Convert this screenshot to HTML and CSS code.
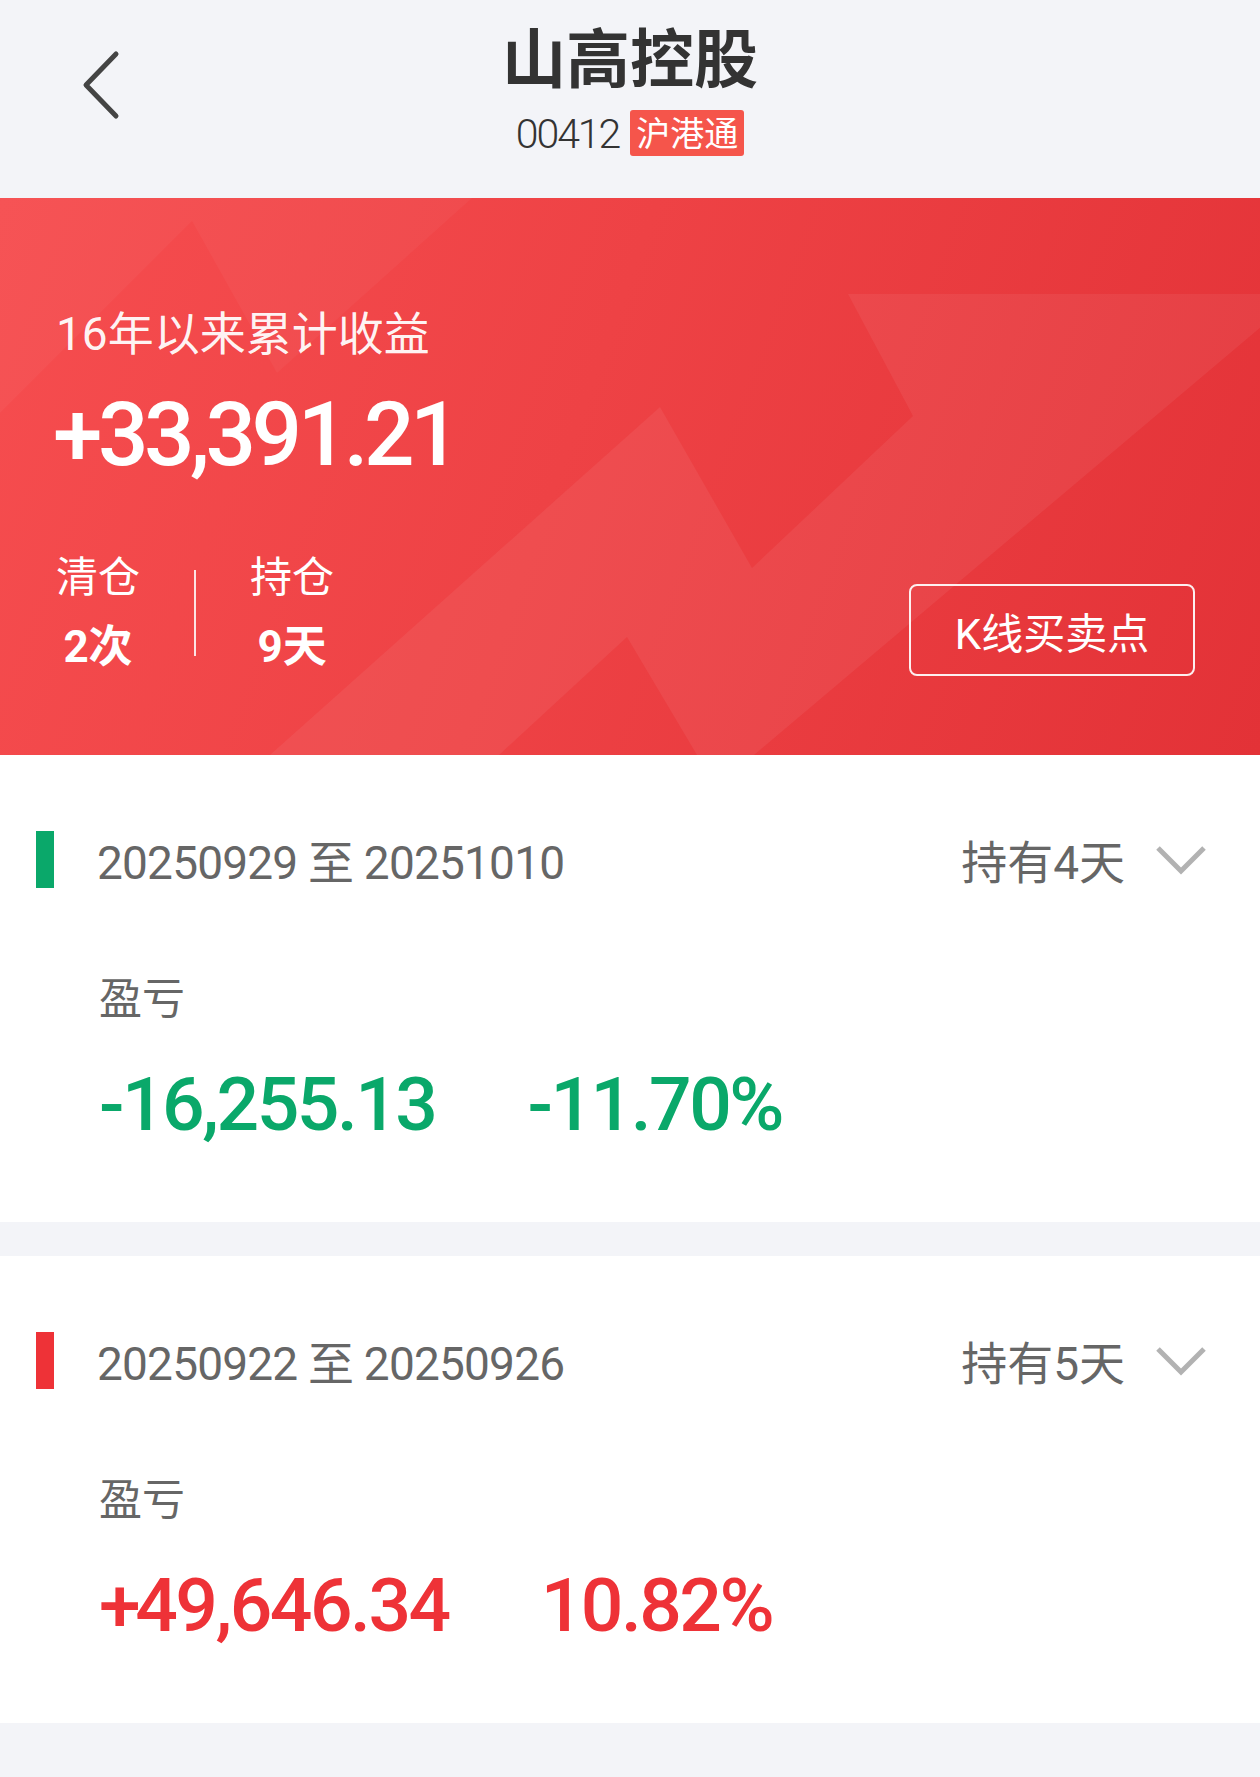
FILE: index.html
```html
<!DOCTYPE html>
<html lang="zh-CN">
	<head>
		<meta charset="UTF-8" />
		<meta name="viewport" content="width=device-width, initial-scale=1" />
		<title>山高控股 交易记录</title>
		<link rel="stylesheet" href="styles.css">
	</head>
	<body>
		<header class="topbar">
			<a class="back" href="#">
				<svg width="40" height="70" viewBox="0 0 40 70">
					<path d="M35 4 L5 35 L35 66" />
				</svg>
			</a>
			<div class="stock">
				<h1 class="stock-name">山高控股</h1>
				<div class="stock-code">
					<span class="code">00412</span>
					<span class="tag">沪港通</span>
				</div>
			</div>
		</header>

		<section class="summary">
			<!-- background pattern -->
			<svg class="summary-bg" viewBox="0 0 1260 557" preserveAspectRatio="none">
				<polygon class="shade-soft" points="0,0 472,0 277,175 192,23 0,215" />
				<polygon class="shade" points="270,557 660,209 752,370 913,218 848,96 1300,96 754,557 697,557 627,439 499,557" />
			</svg>
			<div class="summary-label">16年以来累计收益</div>
			<div class="summary-total">+33,391.21</div>
			<div class="summary-foot">
				<div class="stats">
					<div class="stat">
						<div class="stat-name">清仓</div>
						<div class="stat-value">2次</div>
					</div>
					<div class="stat-divider"></div>
					<div class="stat">
						<div class="stat-name">持仓</div>
						<div class="stat-value">9天</div>
					</div>
				</div>
				<a class="kline-btn" href="#">K线买卖点</a>
			</div>
		</section>

		<section class="trade loss">
			<div class="trade-head">
				<span class="trade-bar"></span>
				<span class="trade-range">20250929 至 20251010</span>
				<span class="trade-hold">持有4天</span>
				<svg class="trade-toggle" width="50" height="30" viewBox="0 0 50 30">
					<polyline points="2,3 25,26 48,3" />
				</svg>
			</div>
			<div class="trade-label">盈亏</div>
			<div class="trade-values">
				<span>-16,255.13</span>
				<span>-11.70%</span>
			</div>
		</section>

		<section class="trade gain">
			<div class="trade-head">
				<span class="trade-bar"></span>
				<span class="trade-range">20250922 至 20250926</span>
				<span class="trade-hold">持有5天</span>
				<svg class="trade-toggle" width="50" height="30" viewBox="0 0 50 30">
					<polyline points="2,3 25,26 48,3" />
				</svg>
			</div>
			<div class="trade-label">盈亏</div>
			<div class="trade-values">
				<span><span class="plus">+</span>49,646.34</span>
				<span>10.82%</span>
			</div>
		</section>
	</body>
</html>
```

FILE: styles.css
```css
body {
	margin: 0;
	background-color: #f3f4f8;
	font-family: 'Roboto', 'Noto Sans CJK SC', sans-serif;
	color: #333;
}

a {
	color: inherit;
	text-decoration: none;
}

/* top bar */

.topbar {
	display: grid;
	grid-template-columns: 1fr auto 1fr;
	height: 198px;
	box-sizing: border-box;
}

.back {
	justify-self: start;
	padding: 50px 0 0 81px;
}

.back svg {
	display: block;
	fill: none;
	stroke: #444;
	stroke-width: 5;
	stroke-linecap: round;
	stroke-linejoin: round;
}

.stock {
	padding-top: 22px;
	text-align: center;
}

.stock-name {
	margin: 0;
	font-family: 'Noto Sans CJK SC', sans-serif;
	font-size: 64px;
	line-height: 64px;
	font-weight: 700;
	color: #333;
}

.stock-code {
	display: flex;
	justify-content: center;
	gap: 11px;
	margin-top: 24px;
}

.code {
	font-size: 41px;
	font-weight: 300;
	line-height: 43px;
	letter-spacing: -2px;
	padding-top: 3px;
	color: #333;
}

.tag {
	padding: 0 6px;
	border-radius: 3px;
	background-color: #f5554b;
	color: #fff;
	font-family: 'Noto Sans CJK SC', sans-serif;
	font-size: 34px;
	line-height: 43px;
}

/* red summary */

.summary {
	position: relative;
	overflow: hidden;
	height: 557px;
	box-sizing: border-box;
	padding: 113px 65px 0 56px;
	background: linear-gradient(110deg, #f64d4f 0%, #ee4245 45%, #e33237 100%);
	color: #fff;
}

.summary-bg {
	position: absolute;
	top: 0;
	left: 0;
	width: 100%;
	height: 100%;
}

.shade {
	fill: #fff;
	fill-opacity: 0.06;
}

.shade-soft {
	fill: #fff;
	fill-opacity: 0.035;
}

.summary-label,
.summary-total,
.summary-foot {
	position: relative;
}

.summary-label {
	font-size: 46px;
	line-height: 46px;
	color: rgba(255, 255, 255, 0.95);
}

.summary-total {
	margin: 33px 0 0 -3px;
	font-size: 89px;
	line-height: 89px;
	font-weight: 500;
	letter-spacing: -4.5px;
}

.summary-foot {
	display: flex;
	justify-content: space-between;
	align-items: flex-start;
	margin-top: 78px;
}

.stats {
	display: flex;
	align-items: center;
}

.stat {
	text-align: center;
}

.stat-name {
	font-size: 42px;
	line-height: 42px;
}

.stat-value {
	margin-top: 26px;
	font-size: 44px;
	line-height: 44px;
	font-weight: 700;
}

.stat-divider {
	width: 2px;
	height: 86px;
	margin: 0 54px;
	background-color: rgba(255, 255, 255, 0.85);
}

.kline-btn {
	display: flex;
	justify-content: center;
	align-items: center;
	width: 286px;
	height: 92px;
	margin-top: 27px;
	box-sizing: border-box;
	border: 2px solid rgba(255, 255, 255, 0.92);
	border-radius: 8px;
	font-size: 42px;
}

/* trade cards */

.trade {
	height: 467px;
	box-sizing: border-box;
	padding: 76px 54px 0 36px;
	background-color: #fff;
}

.trade + .trade {
	margin-top: 34px;
}

.loss {
	--tone: #0aa86a;
}

.gain {
	--tone: #ee3237;
}

.trade-head {
	display: flex;
	align-items: flex-start;
	height: 57px;
}

.trade-bar {
	flex: none;
	width: 18px;
	height: 57px;
	background-color: var(--tone);
}

.trade-range,
.trade-hold {
	margin-top: 4px;
	font-size: 46px;
	line-height: 57px;
	color: #666;
}

.trade-range {
	margin-left: 43px;
	letter-spacing: -0.8px;
}

.trade-hold {
	margin-left: auto;
}

.trade-toggle {
	flex: none;
	margin: 14px 0 0 31px;
	fill: none;
	stroke: #b2b2b2;
	stroke-width: 5;
}

.trade-label {
	margin: 90px 0 0 63px;
	font-size: 43px;
	line-height: 43px;
	color: #666;
}

.trade-values {
	display: flex;
	gap: 92px;
	margin: 46px 0 0 63px;
	font-size: 75px;
	line-height: 75px;
	font-weight: 500;
	letter-spacing: -2.5px;
	color: var(--tone);
}

.plus {
	margin-right: -3px;
}
```
